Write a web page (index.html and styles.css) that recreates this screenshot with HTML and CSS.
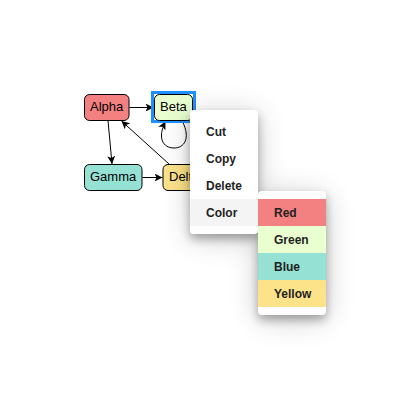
FILE: index.html
```html
<!DOCTYPE html>
<html lang="en">
<head>
<meta charset="utf-8">
<title>Diagram context menu</title>
<link rel="stylesheet" href="styles.css">
</head>
<body>
<main class="diagram">
  <svg class="graph" width="400" height="400" viewBox="0 0 400 400" role="img" aria-label="Diagram">
    <defs>
      <marker id="arrow" viewBox="0 0 8 8" refX="8" refY="4" markerWidth="8" markerHeight="8" markerUnits="userSpaceOnUse" orient="auto">
        <path d="M0 0L8 4L0 8L2 4Z"/>
      </marker>
    </defs>
    <g class="links">
      <path d="M129.500 107.500H153.500"/>
      <path d="M108 120.500L112 164"/>
      <path d="M142.500 177.500H162.500"/>
      <path d="M169 164L121.500 121"/>
      <path d="M182.500 121.500C191 139 184 148 174 148C163 148 157 138 165.500 121.500"/>
    </g>
    <rect class="selection" x="152.500" y="92.500" width="42" height="29"/>
    <g class="nodes">
      <rect class="red" x="84.500" y="94.500" width="44.500" height="26" rx="5"/>
      <rect class="green" x="154.500" y="94.500" width="38" height="26" rx="5"/>
      <rect class="blue" x="84.500" y="164.500" width="57.500" height="26" rx="5"/>
      <rect class="yellow" x="163" y="164.500" width="42" height="26" rx="5"/>
    </g>
    <g class="labels">
      <text x="90" y="111">Alpha</text>
      <text x="160" y="111">Beta</text>
      <text x="90" y="181">Gamma</text>
      <text x="169" y="181">Delta</text>
    </g>
  </svg>
  <ul class="menu context">
    <li><button class="item" type="button">Cut</button></li>
    <li><button class="item" type="button">Copy</button></li>
    <li><button class="item" type="button">Delete</button></li>
    <li class="parent">
      <button class="item active" type="button">Color</button>
      <ul class="menu submenu">
        <li><button class="item red" type="button">Red</button></li>
        <li><button class="item green" type="button">Green</button></li>
        <li><button class="item blue" type="button">Blue</button></li>
        <li><button class="item yellow" type="button">Yellow</button></li>
      </ul>
    </li>
  </ul>
</main>
</body>
</html>
```
FILE: styles.css
```css
body {
  margin: 0;
  background: #fff;
  font-family: "Liberation Sans", Arial, sans-serif;
}

.diagram {
  position: relative;
  z-index: 0;
  min-height: 100vh;
}

.graph {
  position: relative;
  z-index: -2;
  display: block;
}

.links path {
  fill: none;
  stroke: #000;
  marker-end: url(#arrow);
}

.nodes rect {
  stroke: #000;
}

.selection {
  fill: none;
  stroke: #1e90ff;
  stroke-width: 3px;
}

.labels {
  font-size: 13px;
}

.red {
  fill: #f38181;
  background: #f38181;
}

.green {
  fill: #eaffd0;
  background: #eaffd0;
}

.blue {
  fill: #95e1d3;
  background: #95e1d3;
}

.yellow {
  fill: #fce38a;
  background: #fce38a;
}

.menu {
  position: absolute;
  width: 68px;
  margin: 0;
  padding: 8px 0;
  border-radius: 4px;
  background: #fff;
  list-style: none;
}

.context {
  top: 110px;
  left: 190px;
}

/* The shadows lie under both menus, so neither darkens the other. */
.context::before,
.submenu {
  z-index: -1;
  box-shadow: 0 5px 10px rgba(0, 0, 0, .3), 0 4px 30px rgba(0, 0, 0, .2);
}

.context::before {
  position: absolute;
  inset: 0;
  border-radius: 4px;
  content: "";
}

.parent {
  position: relative;
}

.submenu {
  top: -8px;
  left: 100%;
}

.item {
  display: block;
  width: 100%;
  padding: 7px 8px 5px 16px;
  border: 0;
  color: #1f1f1f;
  font: bold 12px/15px "Liberation Sans", Arial, sans-serif;
  text-align: left;
}

.item:not([class*=" "]) {
  background: none;
}

.item.active {
  background: #f4f4f4;
}
```
